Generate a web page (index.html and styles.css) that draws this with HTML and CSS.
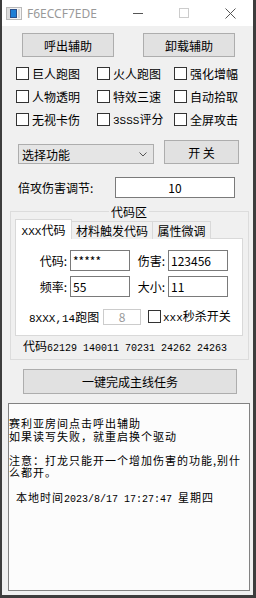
FILE: index.html
```html
<!DOCTYPE html>
<html lang="zh">
<head>
    <meta charset="UTF-8">
    <title>F6ECCF7EDE</title>
    <link rel="stylesheet" href="styles.css">
</head>
<body>
    <div class="window">
        <div class="titlebar">
            <svg class="app-icon" viewBox="0 0 16 13">
                <rect x="0.5" y="0.5" width="15" height="12" fill="#f4f4f4" stroke="#b9b9b9"/>
                <rect x="1" y="1" width="3" height="11" fill="#dcdcdc"/>
                <rect x="4.5" y="2.5" width="6" height="8" fill="#1e7fd6" stroke="#2a4f8a"/>
                <rect x="12" y="2" width="2" height="9" fill="#d6d6d6"/>
            </svg>
            <span class="title">F6ECCF7EDE</span>
            <div class="controls">
                <div class="ctl"><svg width="10" height="10"><line x1="0" y1="5.5" x2="10" y2="5.5" stroke="#555"/></svg></div>
                <div class="ctl"><svg width="10" height="10"><rect x="0.5" y="0.5" width="9" height="9" fill="none" stroke="#ccc"/></svg></div>
                <div class="ctl"><svg width="11" height="11"><path d="M0.5 0.5 L10.5 10.5 M10.5 0.5 L0.5 10.5" stroke="#555"/></svg></div>
            </div>
        </div>

        <div class="top-buttons">
            <button class="btn">呼出辅助</button>
            <button class="btn">卸载辅助</button>
        </div>

        <div class="checks">
            <label class="check"><span class="box"></span><span>巨人跑图</span></label>
            <label class="check"><span class="box"></span><span>火人跑图</span></label>
            <label class="check"><span class="box"></span><span>强化增幅</span></label>
            <label class="check"><span class="box"></span><span>人物透明</span></label>
            <label class="check"><span class="box"></span><span>特效三速</span></label>
            <label class="check"><span class="box"></span><span>自动拾取</span></label>
            <label class="check"><span class="box"></span><span>无视卡伤</span></label>
            <label class="check"><span class="box"></span><span><span class="mono">3SSS</span>评分</span></label>
            <label class="check"><span class="box"></span><span>全屏攻击</span></label>
        </div>

        <div class="select-row">
            <div class="select">
                <span>选择功能</span>
                <svg width="8" height="5"><polyline points="0.5,0.5 4,4 7.5,0.5" fill="none" stroke="#555"/></svg>
            </div>
            <button class="btn btn-toggle">开 关</button>
        </div>

        <div class="mult-row">
            <span class="mult-label">倍攻伤害调节:</span>
            <div class="mult-input">10</div>
        </div>

        <div class="group">
            <div class="group-title">代码区</div>
            <div class="tabs">
                <div class="tab active"><span class="mono">XXX</span>代码</div>
                <div class="tab tab-mat">材料触发代码</div>
                <div class="tab tab-attr">属性微调</div>
            </div>
            <div class="panel">
                <div class="field-row">
                    <span class="field-label">代码:</span>
                    <div class="field-input">*****</div>
                    <span class="field-label second">伤害:</span>
                    <div class="field-input">123456</div>
                </div>
                <div class="field-row">
                    <span class="field-label">频率:</span>
                    <div class="field-input">55</div>
                    <span class="field-label second">大小:</span>
                    <div class="field-input">11</div>
                </div>
                <div class="field-row last-row">
                    <span class="run-label"><span class="mono">8XXX,14</span>跑图</span>
                    <div class="disabled-input">8</div>
                    <label class="check kill"><span class="box"></span><span><span class="mono">xxx</span>秒杀开关</span></label>
                </div>
            </div>
            <div class="code-line">代码<span class="mono num">62129 140011 70231 24262 24263</span></div>
        </div>

        <button class="btn btn-wide">一键完成主线任务</button>

        <div class="log"><br>赛利亚房间点击呼出辅助<br>如果读写失败，就重启换个驱动<br><br>注意：打龙只能开一个增加伤害的功能,别什<br>么都开。<br><br><span class="time">本地时间<span class="mono num">2023/8/17 17:27:47 </span>星期四</span></div>
    </div>
</body>
</html>
```

FILE: styles.css
```css
* {
    box-sizing: border-box;
}
body {
    margin: 0;
    background: #3d3d3d;
    font-family: "Noto Sans CJK SC", sans-serif;
    font-size: 12px;
    color: #000;
}
.mono {
    font-family: "Liberation Mono", monospace;
    font-size: 11px;
}
.mono.num {
    font-size: 10px;
}
.window {
    width: 251px;
    height: 595px;
    margin-left: 2px;
    background: #f0f0f0;
    overflow: hidden;
}
.titlebar {
    height: 26px;
    background: #fff;
    display: flex;
    align-items: center;
}
.app-icon {
    margin-left: 4px;
    width: 16px;
    height: 13px;
}
.title {
    margin-left: 5px;
    color: #999;
    font-family: "Noto Sans", sans-serif;
    font-size: 12px;
}
.controls {
    margin-left: auto;
    display: flex;
    height: 26px;
}
.ctl {
    width: 46px;
    display: flex;
    align-items: center;
    justify-content: center;
}
.btn {
    height: 24px;
    padding: 0;
    background: #e1e1e1;
    border: 1px solid #adadad;
    font: inherit;
    color: #000;
}
.top-buttons {
    display: flex;
    gap: 29px;
    margin-top: 7px;
    padding-left: 20px;
}
.top-buttons .btn {
    width: 92px;
}
.checks {
    display: grid;
    grid-template-columns: 81px 77px auto;
    row-gap: 10px;
    margin-top: 10px;
    padding-left: 14px;
}
.check {
    display: flex;
    align-items: center;
    gap: 3px;
    height: 13px;
    line-height: 13px;
    white-space: nowrap;
}
.box {
    flex: none;
    width: 13px;
    height: 13px;
    border: 1px solid #333;
    background: #fff;
}
.select-row {
    display: flex;
    align-items: flex-start;
    margin-top: 14px;
    padding-left: 16px;
}
.select {
    display: flex;
    align-items: center;
    justify-content: space-between;
    width: 136px;
    height: 20px;
    margin-top: 4px;
    padding: 0 6px 0 3px;
    border: 1px solid #adadad;
    background: #e5e5e5;
}
.btn-toggle {
    width: 75px;
    margin-left: 10px;
}
.mult-row {
    display: flex;
    align-items: center;
    margin-top: 13px;
    padding-left: 16px;
}
.mult-label {
    width: 97px;
}
.mult-input {
    width: 120px;
    height: 21px;
    border: 1px solid #7a7a7a;
    background: #fff;
    text-align: center;
    line-height: 19px;
}
.group {
    margin: 13px 4px 0 8px;
    padding: 7px 5px 3px 4px;
    border: 1px solid #dcdcdc;
}
.group-title {
    width: fit-content;
    margin: -14px auto 0;
    padding: 0 2px;
    background: #f0f0f0;
    line-height: 14px;
}
.tabs {
    display: flex;
    align-items: flex-end;
    height: 20px;
    margin-bottom: -1px;
    position: relative;
    z-index: 1;
}
.tab {
    height: 18px;
    border: 1px solid #d9d9d9;
    border-bottom: none;
    background: #f0f0f0;
    text-align: center;
    line-height: 17px;
    white-space: nowrap;
}
.tab.active {
    width: 57px;
    height: 20px;
    background: #fff;
    line-height: 19px;
}
.tab-mat {
    width: 81px;
    border-left: none;
}
.tab-attr {
    width: 58px;
    border-left: none;
}
.panel {
    height: 98px;
    padding-top: 11px;
    border: 1px solid #d9d9d9;
    background: #fff;
}
.field-row {
    display: flex;
    align-items: center;
}
.field-row + .field-row {
    margin-top: 5px;
}
.field-label {
    width: 51px;
    margin-right: 3px;
    text-align: right;
}
.field-label.second {
    width: 32px;
    margin-left: 3px;
}
.field-input {
    width: 60px;
    height: 21px;
    padding-left: 2px;
    border: 1px solid #7a7a7a;
    line-height: 19px;
}
.field-row.last-row {
    margin-top: 11px;
    padding-left: 13px;
}
.run-label {
    width: 74px;
    white-space: nowrap;
}
.disabled-input {
    width: 38px;
    height: 16px;
    border: 1px solid #ccc;
    color: #999;
    text-align: center;
    line-height: 14px;
}
.check.kill {
    margin-left: 7px;
    gap: 2px;
}
.code-line {
    margin-top: 3px;
    padding-left: 8px;
    line-height: 14px;
    white-space: nowrap;
}
.btn-wide {
    display: block;
    width: 214px;
    height: 25px;
    margin: 9px 0 0 21px;
}
.log {
    width: 242px;
    height: 188px;
    margin: 9px 0 0 6px;
    padding-top: 1px;
    border: 1px solid #828282;
    background: #fcfcfc;
    font-size: 11px;
    letter-spacing: 1px;
    line-height: 12.3px;
    white-space: nowrap;
}
.log .mono {
    letter-spacing: 0;
}
.log .time {
    padding-left: 7px;
}
```
